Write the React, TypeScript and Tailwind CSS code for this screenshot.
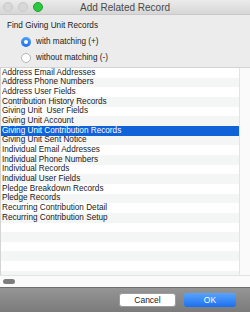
import React from "react"

const records = [
  "Address Email Addresses",
  "Address Phone Numbers",
  "Address User Fields",
  "Contribution History Records",
  "Giving Unit  User Fields",
  "Giving Unit Account",
  "Giving Unit Contribution Records",
  "Giving Unit Sent Notice",
  "Individual Email Addresses",
  "Individual Phone Numbers",
  "Individual Records",
  "Individual User Fields",
  "Pledge Breakdown Records",
  "Pledge Records",
  "Recurring Contribution Detail",
  "Recurring Contribution Setup",
]

const SELECTED = 6
const TOTAL_ROWS = 22

const Radio = ({ checked, label }: { checked: boolean; label: string }) => (
  <div className="flex h-[16px] items-center gap-[5px]">
    {checked ? (
      <span className="flex h-[10px] w-[10px] items-center justify-center rounded-full bg-gradient-to-b from-[#4fa0fb] to-[#1a6ff0]">
        <span className="h-[4px] w-[4px] rounded-full bg-white" />
      </span>
    ) : (
      <span className="h-[10px] w-[10px] rounded-full border border-[#b5b5b5] bg-white" />
    )}
    <span>{label}</span>
  </div>
)

const App: React.FC = () => {
  const rows = Array.from({ length: TOTAL_ROWS }, (_, i) => records[i] ?? "")
  return (
    <div className="flex h-[312px] w-[250px] flex-col overflow-hidden bg-[#ececec] font-['Liberation_Sans',Arial,sans-serif] text-[8.2px] text-[#1a1a1a]">
      {/* title bar */}
      <div className="relative flex h-[15px] items-center justify-center border-b border-[#c8c8c8] bg-gradient-to-b from-[#ebebeb] to-[#d6d6d6]">
        <div className="absolute left-[3px] top-[2px] flex gap-[5px]">
          <span className="h-[10px] w-[10px] rounded-full border border-[#c9c9c9] bg-[#d8d8d8]" />
          <span className="h-[10px] w-[10px] rounded-full border border-[#c9c9c9] bg-[#d8d8d8]" />
          <span className="h-[10px] w-[10px] rounded-full border border-[#1aa52b] bg-[#2bc840]" />
        </div>
        <span className="text-[10px] text-[#4a4a4a]">Add Related Record</span>
      </div>

      {/* options */}
      <div className="flex h-[52px] flex-col pl-[7px] pt-[5px]">
        <div className="h-[13px]">Find Giving Unit Records</div>
        <div className="flex flex-col pl-[14px] pt-[1px]">
          <Radio checked label="with matching (+)" />
          <Radio checked={false} label="without matching (-)" />
        </div>
      </div>

      {/* list */}
      <div className="flex h-[208px] border-l border-t border-[#d4d4d4] bg-white">
        <div className="flex w-[238px] flex-col overflow-hidden">
          {rows.map((name, i) => (
            <div
              key={i}
              className={`flex h-[9.67px] shrink-0 items-center whitespace-pre pl-[1px] leading-none ${
                i === SELECTED
                  ? "bg-[#0f62d7] text-white"
                  : i % 2 === 0
                    ? "bg-white"
                    : "bg-[#f4f5f5]"
              }`}
            >
              {name}
            </div>
          ))}
        </div>
        <div className="flex-1 border-l border-[#e3e3e3] bg-[#fafafa]" />
      </div>

      {/* horizontal scroller */}
      <div className="flex h-[12px] items-center border-t border-[#e3e3e3] bg-[#fafafa] pl-[3px]">
        <span className="h-[5px] w-[12px] rounded-full bg-[#7d7d7d]" />
      </div>

      {/* footer */}
      <div className="flex flex-1 items-center justify-end gap-[8px] border-t border-[#6e6e6e] bg-gradient-to-b from-[#959595] to-[#7b7b7b] pr-[14px]">
        <button className="h-[14px] w-[57px] rounded-[3px] border border-[#9c9c9c] bg-white text-[8.5px] leading-none text-[#1a1a1a]">
          Cancel
        </button>
        <button className="h-[14px] w-[52px] rounded-[3px] bg-gradient-to-b from-[#5aa4fb] to-[#1a6ff0] text-[8.5px] leading-none text-white">
          OK
        </button>
      </div>
    </div>
  )
}

export default App
